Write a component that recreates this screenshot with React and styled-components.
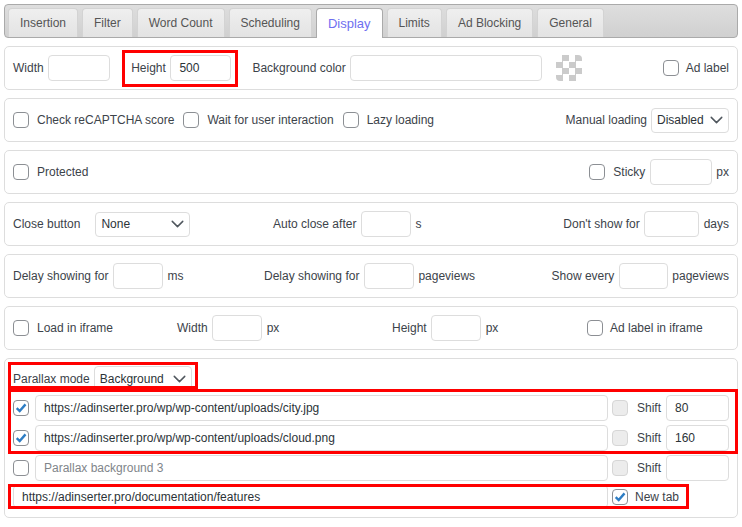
import React from 'react'
import styled, {createGlobalStyle} from 'styled-components'
import {ChevronDown} from 'lucide-react'

const GlobalStyle = createGlobalStyle`
    * { box-sizing: border-box; }
    body {
        margin: 0;
        background: #fff;
        font-family: "Liberation Sans", Arial, sans-serif;
        font-size: 12px;
        color: #3c434a;
    }
`

const tabs = ['Insertion', 'Filter', 'Word Count', 'Scheduling', 'Display', 'Limits', 'Ad Blocking', 'General']

const Page = styled.div`
    display: flex;
    flex-direction: column;
    gap: 8px;
    padding: 4px;
`

const TabBar = styled.div`
    display: flex;
    gap: 4px;
    padding: 3px 3px 0;
    border: 1px solid #aaa;
    border-radius: 4px;
    background: linear-gradient(#dedede, #d0d0d0);
`

const Tab = styled.div`
    display: flex;
    align-items: center;
    height: ${({$active}) => $active ? 30 : 29}px;
    margin-bottom: ${({$active}) => $active ? -1 : 0}px;
    padding: 0 11px 1px;
    border: 1px solid ${({$active}) => $active ? '#aaa' : '#d3d3d3'};
    border-bottom: none;
    border-radius: 4px 4px 0 0;
    background: ${({$active}) => $active ? '#fff' : 'linear-gradient(#efefef, #e3e3e3)'};
    color: ${({$active}) => $active ? '#6f6ff0' : '#555'};
    font-size: ${({$active}) => $active ? 13 : 12}px;
`

const Panel = styled.div`
    display: flex;
    align-items: center;
    justify-content: space-between;
    min-height: 44px;
    padding: 8px;
    border: 1px solid #ddd;
    border-radius: 5px;
`

const GridPanel = styled(Panel)`
    display: grid;
    grid-template-columns: ${({$cols}) => $cols};
`

const StackPanel = styled(Panel)`
    flex-direction: column;
    align-items: stretch;
    gap: 4px;
    padding: 7px 8px 9px;
`

const Group = styled.div`
    display: flex;
    align-items: center;
    gap: ${({$gap = 4.5}) => $gap}px;
    justify-self: ${({$end}) => $end ? 'end' : 'start'};
`

const Text = styled.span`
    white-space: nowrap;
`

const Input = styled.input`
    flex: ${({$w}) => $w ? 'none' : '1'};
    width: ${({$w}) => $w ? `${$w}px` : 'auto'};
    min-width: 0;
    height: ${({$h = 26}) => $h}px;
    padding: 0 8px;
    border: 1px solid #ddd;
    border-radius: 4px;
    background: #fff;
    font: inherit;
    color: #2c3338;
    outline: none;
    &::placeholder { color: #80858a; }
`

const Checker = styled.div`
    width: 26px;
    height: 26px;
    border-radius: 4px;
    background: conic-gradient(#cbcbcb 25%, #fff 0 50%, #cbcbcb 0 75%, #fff 0) 0 0 / 13px 13px;
`

const Box = styled.span`
    flex: none;
    display: flex;
    align-items: center;
    justify-content: center;
    width: 16px;
    height: 16px;
    border: 1px solid ${({$disabled}) => $disabled ? '#d6d6d6' : '#8c8f94'};
    border-radius: 4px;
    background: ${({$disabled}) => $disabled ? '#ececec' : '#fff'};
`

const Checkbox = ({checked, disabled}) => (
    <Box $disabled={disabled}>
        {checked && (
            <svg width="14" height="14" viewBox="0 0 14 14">
                <path d="M2.7 7.1 5.7 10 11.5 3.4" fill="none" stroke="#2e7dc4" strokeWidth="2.4"/>
            </svg>
        )}
    </Box>
)

const Check = ({label, checked, disabled, gap = 8}) => (
    <Group $gap={gap}>
        <Checkbox checked={checked} disabled={disabled}/>
        <Text>{label}</Text>
    </Group>
)

const SelectWrap = styled.div`
    position: relative;
    flex: none;
    width: ${({$w}) => $w}px;
    height: 25px;
    color: #50575e;
`

const SelectField = styled.select`
    appearance: none;
    width: 100%;
    height: 100%;
    padding: 0 22px 0 5px;
    border: 1px solid #ddd;
    border-radius: 4px;
    background: #fff;
    font: inherit;
    color: #2c3338;
    outline: none;
`

const Arrow = styled(ChevronDown)`
    position: absolute;
    right: 2px;
    top: 50%;
    transform: translateY(-50%);
    pointer-events: none;
`

const Select = ({value, w}) => (
    <SelectWrap $w={w}>
        <SelectField defaultValue={value}>
            <option>{value}</option>
        </SelectField>
        <Arrow size={21} strokeWidth={1.7}/>
    </SelectWrap>
)

// red annotation frame drawn over its content
const Marked = styled.div`
    position: relative;
    display: flex;
    flex-direction: ${({$column}) => $column ? 'column' : 'row'};
    align-items: ${({$column}) => $column ? 'stretch' : 'center'};
    align-self: ${({$fit}) => $fit ? 'flex-start' : 'stretch'};
    gap: ${({$gap = 4.5}) => $gap}px;
    &::after {
        content: '';
        position: absolute;
        inset: ${({$inset}) => $inset};
        border: 3px solid #f00;
        pointer-events: none;
    }
`

const Row = styled.div`
    display: flex;
    align-items: center;
    gap: 6px;
    height: 26px;
`

const Tail = styled.div`
    flex: none;
    display: flex;
    align-items: center;
    gap: ${({$gap}) => $gap}px;
    width: 117px;
    margin-left: -2px;
`

const ParallaxRow = ({checked, value, placeholder, shift}) => (
    <Row>
        <Checkbox checked={checked}/>
        <Input defaultValue={value} placeholder={placeholder}/>
        <Tail $gap={9}>
            <Checkbox disabled/>
            <Text>Shift</Text>
            <Input defaultValue={shift} style={{marginLeft: -4}}/>
        </Tail>
    </Row>
)

export default function App() {
    return (
        <Page>
            <GlobalStyle/>
            <TabBar>
                {tabs.map(t => <Tab key={t} $active={t === 'Display'}>{t}</Tab>)}
            </TabBar>

            <Panel>
                <Group $gap={21}>
                    <Group>
                        <Text>Width</Text>
                        <Input $w={62}/>
                    </Group>
                    <Marked $inset="-5px -7px -6px -9px">
                        <Text>Height</Text>
                        <Input $w={61} defaultValue="500"/>
                    </Marked>
                    <Group $gap={14}>
                        <Group>
                            <Text>Background color</Text>
                            <Input $w={192}/>
                        </Group>
                        <Checker/>
                    </Group>
                </Group>
                <Check label="Ad label" gap={7}/>
            </Panel>

            <Panel>
                <Group $gap={9}>
                    <Check label="Check reCAPTCHA score"/>
                    <Check label="Wait for user interaction"/>
                    <Check label="Lazy loading"/>
                </Group>
                <Group $gap={4}>
                    <Text>Manual loading</Text>
                    <Select value="Disabled" w={78}/>
                </Group>
            </Panel>

            <Panel>
                <Check label="Protected"/>
                <Group>
                    <Check label="Sticky"/>
                    <Input $w={62}/>
                    <Text>px</Text>
                </Group>
            </Panel>

            <GridPanel $cols="260px 1fr auto">
                <Group $gap={15}>
                    <Text>Close button</Text>
                    <Select value="None" w={95}/>
                </Group>
                <Group>
                    <Text>Auto close after</Text>
                    <Input $w={50}/>
                    <Text>s</Text>
                </Group>
                <Group $end>
                    <Text>Don't show for</Text>
                    <Input $w={55}/>
                    <Text>days</Text>
                </Group>
            </GridPanel>

            <GridPanel $cols="251px 1fr auto">
                <Group>
                    <Text>Delay showing for</Text>
                    <Input $w={50}/>
                    <Text>ms</Text>
                </Group>
                <Group>
                    <Text>Delay showing for</Text>
                    <Input $w={50}/>
                    <Text>pageviews</Text>
                </Group>
                <Group $end>
                    <Text>Show every</Text>
                    <Input $w={49}/>
                    <Text>pageviews</Text>
                </Group>
            </GridPanel>

            <GridPanel $cols="164px 215px 195px 1fr">
                <Check label="Load in iframe"/>
                <Group>
                    <Text>Width</Text>
                    <Input $w={50}/>
                    <Text>px</Text>
                </Group>
                <Group>
                    <Text>Height</Text>
                    <Input $w={50}/>
                    <Text>px</Text>
                </Group>
                <Check label="Ad label in iframe" gap={7}/>
            </GridPanel>

            <StackPanel>
                <Marked $fit $gap={4} $inset="-4px -6px 2px -5px">
                    <Text>Parallax mode</Text>
                    <Select value="Background" w={98}/>
                </Marked>
                <Marked $column $gap={4} $inset="-6px -9px -3px -5px">
                    <ParallaxRow checked value="https://adinserter.pro/wp/wp-content/uploads/city.jpg" shift="80"/>
                    <ParallaxRow checked value="https://adinserter.pro/wp/wp-content/uploads/cloud.png" shift="160"/>
                </Marked>
                <ParallaxRow placeholder="Parallax background 3"/>
                <Marked $gap={6} $inset="-1px 40px -1px -5px">
                    <Input $h={23} defaultValue="https://adinserter.pro/documentation/features"/>
                    <Tail $gap={7}>
                        <Checkbox checked/>
                        <Text>New tab</Text>
                    </Tail>
                </Marked>
            </StackPanel>
        </Page>
    )
}
